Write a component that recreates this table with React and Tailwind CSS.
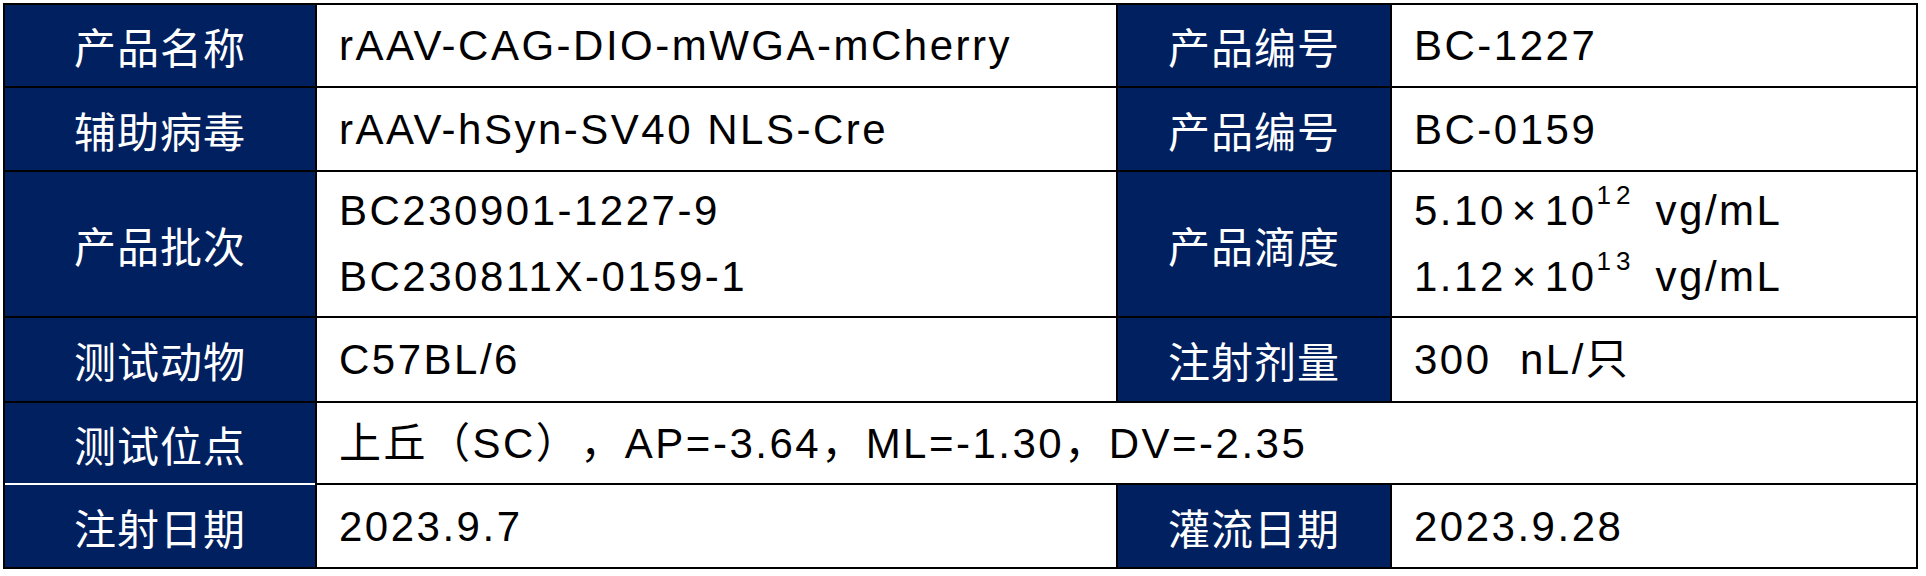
import React from "react";

const label =
  "flex items-center justify-center bg-[#002060] text-white text-[42px] tracking-[1px] font-['Noto_Sans_CJK_SC',sans-serif]";
const value =
  "flex items-center bg-white pl-[22px] text-black text-[42px] tracking-[2.5px] whitespace-pre font-['Liberation_Sans','Noto_Sans_CJK_SC',sans-serif]";

function Titer({ base, exp }) {
  return (
    <div>
      {base}
      <span className="mx-[6px]">×</span>
      10
      <sup className="relative -top-[21px] mr-[6px] align-baseline text-[26px] leading-none tracking-[5px]">{exp}</sup>
      {" vg/mL"}
    </div>
  );
}

export default function App() {
  return (
    <div className="min-h-screen bg-white p-[3px]">
      <div className="grid w-[1915px] grid-cols-[310px_799px_272px_524px] grid-rows-[81px_82px_144px_83px_80px_82px] gap-[2px] border-2 border-black bg-black">
        {/* 1 */}
        <div className={label}>产品名称</div>
        <div className={value}>rAAV-CAG-DIO-mWGA-mCherry</div>
        <div className={label}>产品编号</div>
        <div className={value}>BC-1227</div>

        {/* 2 */}
        <div className={label}>辅助病毒</div>
        <div className={value}>rAAV-hSyn-SV40 NLS-Cre</div>
        <div className={label}>产品编号</div>
        <div className={value}>BC-0159</div>

        {/* 3 */}
        <div className={label}>产品批次</div>
        <div className={`${value} flex-col items-start justify-center leading-[66px]`}>
          <div>BC230901-1227-9</div>
          <div>BC230811X-0159-1</div>
        </div>
        <div className={label}>产品滴度</div>
        <div className={`${value} flex-col items-start justify-center leading-[66px]`}>
          <Titer base="5.10" exp="12" />
          <Titer base="1.12" exp="13" />
        </div>

        {/* 4 */}
        <div className={label}>测试动物</div>
        <div className={value}>C57BL/6</div>
        <div className={label}>注射剂量</div>
        <div className={value}>300  nL/只</div>

        {/* 5 */}
        <div className={`${label} shadow-[0_2px_0_#fff]`}>测试位点</div>
        <div className={`${value} col-span-3 [text-spacing-trim:space-all]`}>
          上丘（SC），AP=-3.64，ML=-1.30，DV=-2.35
        </div>

        {/* 6 */}
        <div className={label}>注射日期</div>
        <div className={value}>2023.9.7</div>
        <div className={label}>灌流日期</div>
        <div className={value}>2023.9.28</div>
      </div>
    </div>
  );
}
